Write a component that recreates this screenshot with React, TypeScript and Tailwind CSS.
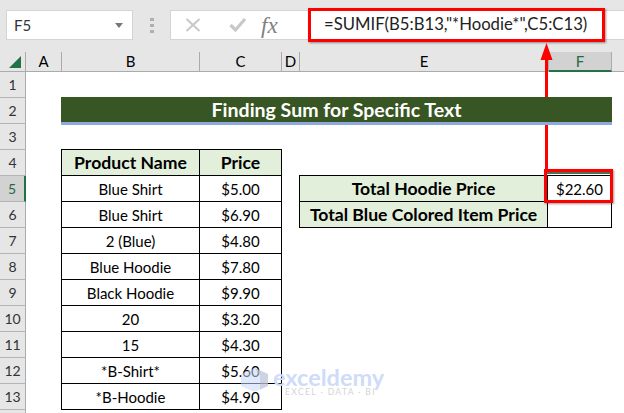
const font = { fontFamily: '"Lato", "Liberation Sans", sans-serif' };

function ColHead({ w, label, active }: { w: string; label: string; active?: boolean }) {
  return (
    <div className={`${w} h-full shrink-0 flex items-center justify-center border-r border-[#ababab] text-[15px] ${active ? "bg-[#d2d2d2] text-[#1f6b45] border-b-2 border-b-[#217346]" : "text-black border-b border-b-[#ababab]"}`}>
      {label}
    </div>
  );
}

function Row({ n, active, children }: { n: number; active?: boolean; children?: React.ReactNode }) {
  return (
    <div className="flex h-[26px]">
      <div className={`w-[26px] shrink-0 flex items-end justify-center pb-[2px] border-b border-[#b4b4b4] text-[14px] ${active ? "bg-[#d2d2d2] text-[#1f6b45] border-r-2 border-r-[#217346]" : "bg-[#e6e6e6] text-[#333] border-r border-r-[#ababab]"}`}>
        {n}
      </div>
      {children}
    </div>
  );
}

function Cell({ w, head, first, top, children }: { w: string; head?: boolean; first?: boolean; top?: boolean; children?: React.ReactNode }) {
  return (
    <div className={`${w} shrink-0 flex items-center justify-center pt-[1px] border-r border-b border-black text-black ${first ? "border-l" : ""} ${top ? "border-t h-[27px] -mt-px" : "h-[26px]"} ${head ? "bg-[#e2efda] font-bold text-[17.6px]" : "bg-white text-[15px]"}`}>
      {children}
    </div>
  );
}

const products: [string, string][] = [
  ["Blue Shirt", "$5.00"],
  ["Blue Shirt", "$6.90"],
  ["2 (Blue)", "$4.80"],
  ["Blue Hoodie", "$7.80"],
  ["Black Hoodie", "$9.90"],
  ["20", "$3.20"],
  ["15", "$4.30"],
  ["*B-Shirt*", "$5.60"],
  ["*B-Hoodie", "$4.90"],
];

export default function App() {
  return (
    <div className="relative w-[624px] h-[413px] overflow-hidden bg-white" style={font}>
      {/* ribbon */}
      <div className="h-[52px] bg-[#e6e6e6] flex items-start pt-[10px] pl-[6px]">
        <div className="w-[127px] h-[30px] bg-white border border-[#d4d4d4] flex items-center justify-between pl-[7px] pr-[9px] text-[15px] text-[#333]">
          <span>F5</span>
          <span className="w-0 h-0 border-l-[4px] border-r-[4px] border-t-[5px] border-l-transparent border-r-transparent border-t-[#777]" />
        </div>
        <div className="w-[37px] h-[30px] flex flex-col items-center justify-center gap-[3px] pl-[1px]">
          <span className="w-[4px] h-[3px] bg-[#b0b0b0]" />
          <span className="w-[4px] h-[3px] bg-[#b0b0b0]" />
          <span className="w-[4px] h-[3px] bg-[#b0b0b0]" />
        </div>
        <div className="flex-1 h-[30px] bg-white border-y border-l border-[#d4d4d4] flex items-center">
          <div className="w-[138px] shrink-0 flex items-center">
            <svg width="16" height="16" viewBox="0 0 16 16" className="ml-[14px]">
              <path d="M1.5 2 L14.5 14 M14.5 2 L1.5 14" stroke="#c8c8c8" strokeWidth="2" fill="none" />
            </svg>
            <svg width="18" height="16" viewBox="0 0 18 16" className="ml-[28px]">
              <path d="M1.5 8 L6.5 13 L16 2" stroke="#c8c8c8" strokeWidth="3.2" fill="none" />
            </svg>
            <span className="ml-[14px] text-[23px] italic text-[#808080] leading-none" style={{ fontFamily: '"Liberation Serif", serif' }}>fx</span>
          </div>
          <div className="text-[16.7px] text-[#222] whitespace-nowrap ml-[15px]">=SUMIF(B5:B13,"*Hoodie*",C5:C13)</div>
        </div>
      </div>
      {/* column headers */}
      <div className="flex h-[20px] bg-[#e6e6e6]">
        <div className="w-[26px] shrink-0 h-full border-r border-b border-[#ababab] flex items-center justify-center">
          <svg width="13" height="13" viewBox="0 0 13 13" className="mr-[-5px] mt-[2px]"><path d="M12 0 V12 H0 Z" fill="#217346" /></svg>
        </div>
        <ColHead w="w-[36px]" label="A" />
        <ColHead w="w-[138px]" label="B" />
        <ColHead w="w-[82px]" label="C" />
        <ColHead w="w-[18px]" label="D" />
        <ColHead w="w-[249px]" label="E" />
        <ColHead w="w-[63px]" label="F" active />
        <div className="flex-1 border-b border-[#ababab]" />
      </div>
      {/* sheet */}
      <div className="flex flex-col">
        <Row n={1} />
        <Row n={2}>
          <div className="ml-[35px] -mt-px w-[551px] h-[28px] bg-[#375623] border-b-[3px] border-[#8ea9db] flex items-center justify-center text-white font-bold text-[19.5px] z-10">
            Finding Sum for Specific Text
          </div>
        </Row>
        <Row n={3} />
        <Row n={4}>
          <div className="w-[35px]" />
          <Cell w="w-[139px]" head first top>Product Name</Cell>
          <Cell w="w-[82px]" head top>Price</Cell>
        </Row>
        {products.map(([name, price], i) => (
          <Row key={i} n={i + 5} active={i === 0}>
            <div className="w-[35px]" />
            <Cell w="w-[139px]" first>{name}</Cell>
            <Cell w="w-[82px]">{price}</Cell>
            {i === 0 && (
              <>
                <div className="w-[17px]" />
                <Cell w="w-[249px]" head first top>Total Hoodie Price</Cell>
                <Cell w="w-[64px]" top>$22.60</Cell>
              </>
            )}
            {i === 1 && (
              <>
                <div className="w-[17px]" />
                <Cell w="w-[249px]" head first>Total Blue Colored Item Price</Cell>
                <Cell w="w-[64px]" />
              </>
            )}
          </Row>
        ))}
        <div className="w-[26px] h-[4px] bg-[#e6e6e6] border-r border-[#ababab]" />
      </div>
      {/* red annotations */}
      <div className="absolute left-[308px] top-[8px] w-[297px] h-[34px] border-[3px] border-[#ff0000] shadow-[1px_1px_2px_rgba(0,0,0,0.4)]" />
      <div className="absolute left-[544px] top-[169px] w-[69px] h-[34px] border-[3px] border-[#ff0000] shadow-[1px_1px_2px_rgba(0,0,0,0.4)]">
        <div className="h-[2px] bg-[#4f6f57]" />
      </div>
      <svg className="absolute left-[530px] top-[40px]" width="34" height="134" viewBox="0 0 34 134">
        <path d="M16.5 14 V132" stroke="#ff0000" strokeWidth="3" />
        <path d="M16.5 3 L10.5 20 H22.5 Z" fill="#ff0000" />
      </svg>
      {/* watermark */}
      <div className="absolute left-[240px] top-[367px] flex items-start gap-[4px]">
        <svg width="29" height="26" viewBox="0 0 29 26">
          <path d="M14.5 1 L28 7 V19 L14.5 25 L1 19 V7 Z" fill="#c9d8fa" fillOpacity="0.55" />
          <path d="M14.5 1 L28 7 V19 L20 22.5 V9 Z" fill="#b8b8c4" fillOpacity="0.45" />
        </svg>
        <div className="flex flex-col">
          <span className="text-[23.5px] font-bold text-[#cfdcf9] leading-[21px] h-[21px]">exceldemy</span>
          <span className="ml-[12px] text-[8.5px] tracking-[1.4px] text-[#d4d4d4] leading-[8px] whitespace-nowrap">EXCEL · DATA · BI</span>
        </div>
      </div>
    </div>
  );
}
